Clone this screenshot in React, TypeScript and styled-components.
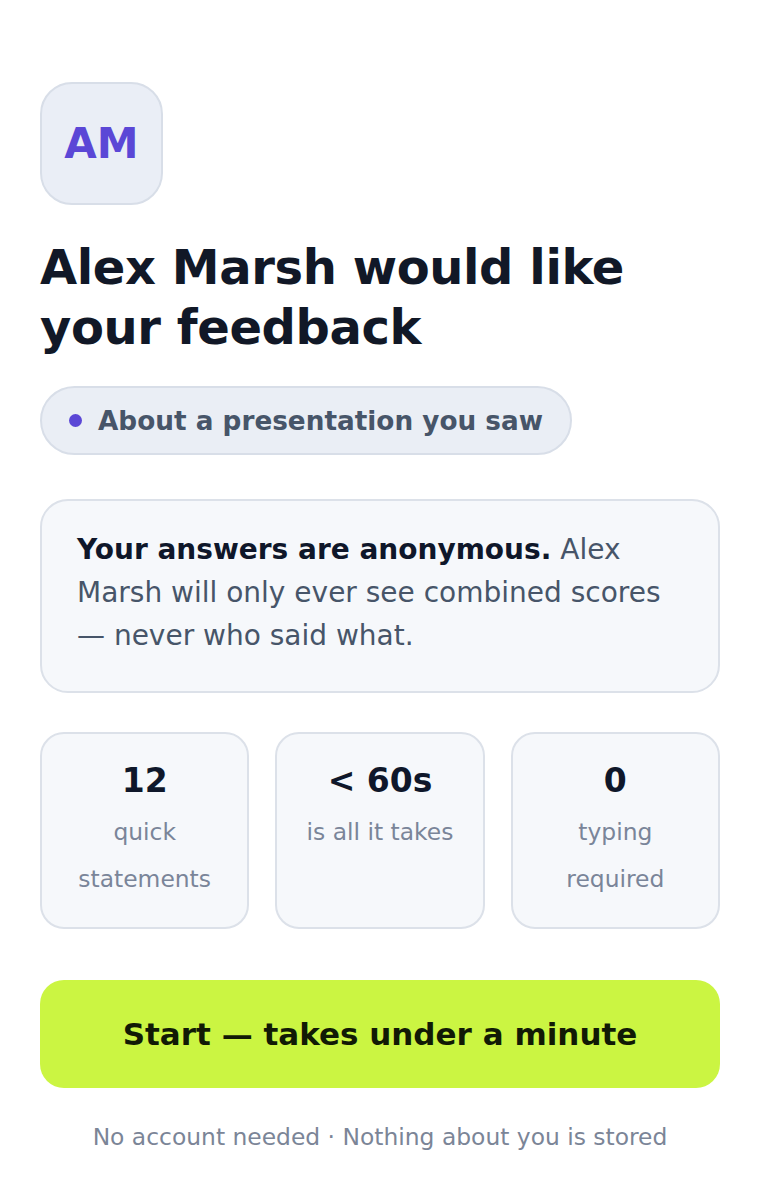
import React from "react";
import styled, { createGlobalStyle } from "styled-components";

const Global = createGlobalStyle`
  html, body { margin: 0; padding: 0; background: #ffffff; }
  body { font-family: "DejaVu Sans", "Liberation Sans", sans-serif; }
  * { box-sizing: border-box; }
`;

const Page = styled.main`
  display: flex;
  flex-direction: column;
  align-items: flex-start;
  padding: 82px 40px 40px;
`;

const Avatar = styled.div`
  width: 123px;
  height: 123px;
  border-radius: 32px;
  background: #eaeef6;
  border: 2px solid #d8dee8;
  display: flex;
  align-items: center;
  justify-content: center;
  color: #5b47d6;
  font-weight: 700;
  font-size: 42px;
`;

const Title = styled.h1`
  margin: 32px 0 0;
  font-size: 48px;
  line-height: 60px;
  font-weight: 700;
  letter-spacing: -0.4px;
  color: #111827;
`;

const Chip = styled.div`
  margin-top: 29px;
  display: inline-flex;
  align-items: center;
  gap: 16px;
  height: 69px;
  padding: 0 27px;
  border-radius: 999px;
  background: #eaeef5;
  border: 2px solid #d8dee8;
  color: #475569;
  font-weight: 700;
  font-size: 26.3px;
`;

const Dot = styled.span`
  width: 13px;
  height: 13px;
  border-radius: 50%;
  background: #5b47d6;
  flex: none;
`;

const InfoCard = styled.p`
  margin: 44px 0 0;
  width: 100%;
  padding: 27px 35px 34px;
  border-radius: 28px;
  background: #f6f8fb;
  border: 2px solid #dce1e9;
  font-size: 28px;
  line-height: 43px;
  color: #475569;
`;

const Strong = styled.strong`
  color: #0f172a;
  font-weight: 700;
`;

const Stats = styled.div`
  margin-top: 39px;
  width: 100%;
  display: grid;
  grid-template-columns: repeat(3, 1fr);
  gap: 26px;
`;

const Stat = styled.div`
  min-height: 195px;
  padding: 25px 24px 24px;
  border-radius: 24px;
  background: #f6f8fb;
  border: 2px solid #dce1e9;
  display: flex;
  flex-direction: column;
  align-items: center;
  text-align: center;
`;

const StatValue = styled.div`
  font-size: 33px;
  line-height: 44px;
  font-weight: 700;
  color: #0f172a;
`;

const StatLabel = styled.div`
  margin-top: 6px;
  font-size: 23.4px;
  line-height: 47px;
  color: #7a8599;
`;

const StartButton = styled.button`
  margin-top: 51px;
  width: 100%;
  height: 108px;
  border: none;
  border-radius: 24px;
  background: #cbf542;
  color: #111a05;
  font-family: inherit;
  font-weight: 700;
  font-size: 31px;
  cursor: pointer;
`;

const Footnote = styled.p`
  margin: 34px 0 0;
  width: 100%;
  text-align: center;
  font-size: 23.4px;
  line-height: 30px;
  color: #7b8597;
`;

const stats = [
  { value: "12", label: "quick statements" },
  { value: "< 60s", label: "is all it takes" },
  { value: "0", label: "typing required" },
];

export default function App() {
  return (
    <>
      <Global />
      <Page>
        <Avatar>AM</Avatar>
        <Title>Alex Marsh would like your feedback</Title>
        <Chip>
          <Dot />
          About a presentation you saw
        </Chip>
        <InfoCard>
          <Strong>Your answers are anonymous.</Strong> Alex Marsh will only ever
          see combined scores — never who said what.
        </InfoCard>
        <Stats>
          {stats.map((s) => (
            <Stat key={s.value}>
              <StatValue>{s.value}</StatValue>
              <StatLabel>{s.label}</StatLabel>
            </Stat>
          ))}
        </Stats>
        <StartButton>Start — takes under a minute</StartButton>
        <Footnote>No account needed · Nothing about you is stored</Footnote>
      </Page>
    </>
  );
}
